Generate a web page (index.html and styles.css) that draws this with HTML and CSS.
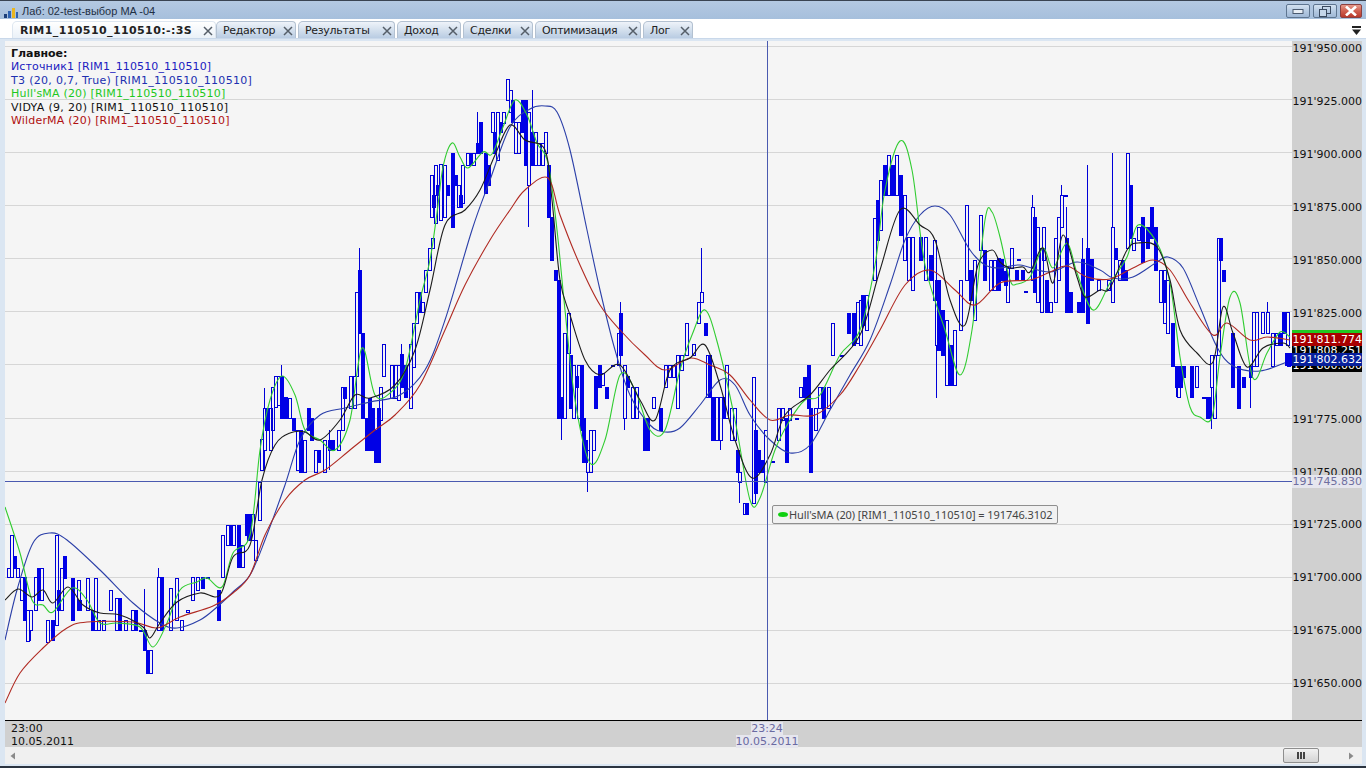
FILE: index.html
```html
<!DOCTYPE html>
<html lang="ru">
<head>
<meta charset="utf-8">
<title>Лаб: 02-test-выбор MA -04</title>
<link rel="stylesheet" href="styles.css">
</head>
<body>
<div class="window">
  <header class="titlebar">
    <svg class="app-icon" width="16" height="12" viewBox="0 0 16 12">
      <rect x="1" y="7" width="3" height="4" fill="#1d3f7a"/>
      <rect x="5" y="4" width="3" height="7" fill="#2f62b0"/>
      <rect x="9" y="1" width="3" height="10" fill="#e8b520"/>
      <rect x="13" y="5" width="2" height="6" fill="#2f62b0"/>
    </svg>
    <span class="title">Лаб: 02-test-выбор MA -04</span>
    <div class="winbtns">
      <button class="winbtn"><svg width="12" height="8" viewBox="0 0 12 8"><rect x="1" y="2.5" width="10" height="4" fill="#e8eef5" stroke="#4a5a70"/></svg></button>
      <button class="winbtn"><svg width="12" height="11" viewBox="0 0 12 11"><rect x="3.5" y="0.5" width="8" height="7" fill="none" stroke="#3a4a60"/><rect x="0.5" y="3.5" width="7" height="7" fill="#c4d6ea" stroke="#3a4a60"/></svg></button>
      <button class="winbtn close"><svg width="14" height="10" viewBox="0 0 14 10"><path d="M2 0.5 L12 9.5 M12 0.5 L2 9.5" stroke="#fff" stroke-width="2.6" fill="none"/></svg></button>
    </div>
  </header>

  <nav class="tabs">
    <div class="tab active"><span>RIM1_110510_110510:-:3S</span><svg class="tab-x" viewBox="0 0 10 10"><path d="M1 1 L9 9 M9 1 L1 9"/></svg></div>
    <div class="tab w-editor"><span>Редактор</span><svg class="tab-x" viewBox="0 0 10 10"><path d="M1 1 L9 9 M9 1 L1 9"/></svg></div>
    <div class="tab w-results"><span>Результаты</span><svg class="tab-x" viewBox="0 0 10 10"><path d="M1 1 L9 9 M9 1 L1 9"/></svg></div>
    <div class="tab w-income"><span>Доход</span><svg class="tab-x" viewBox="0 0 10 10"><path d="M1 1 L9 9 M9 1 L1 9"/></svg></div>
    <div class="tab w-deals"><span>Сделки</span><svg class="tab-x" viewBox="0 0 10 10"><path d="M1 1 L9 9 M9 1 L1 9"/></svg></div>
    <div class="tab w-opt"><span>Оптимизация</span><svg class="tab-x" viewBox="0 0 10 10"><path d="M1 1 L9 9 M9 1 L1 9"/></svg></div>
    <div class="tab w-log"><span>Лог</span><svg class="tab-x" viewBox="0 0 10 10"><path d="M1 1 L9 9 M9 1 L1 9"/></svg></div>
    <svg class="tabs-menu" width="9" height="9" viewBox="0 0 9 9"><rect x="0" y="0" width="9" height="2" fill="#222"/><path d="M0 3.5 H9 L4.5 9 Z" fill="#222"/></svg>
  </nav>

  <main class="frame">
    <div class="chart-row">
      <section class="chart">
        <svg id="plot" class="plot" viewBox="5 41 1287 679" width="1287" height="679" shape-rendering="auto"></svg>
        <div class="legend">
          <div class="legend-head">Главное:</div>
          <div class="c-blue">Источник1 [RIM1_110510_110510]</div>
          <div class="c-navy">T3 (20, 0,7, True) [RIM1_110510_110510]</div>
          <div class="c-green">Hull'sMA (20) [RIM1_110510_110510]</div>
          <div class="c-black">VIDYA (9, 20) [RIM1_110510_110510]</div>
          <div class="c-red">WilderMA (20) [RIM1_110510_110510]</div>
        </div>
        <div class="tooltip"><i class="dot"></i>Hull'sMA (20) [RIM1_110510_110510] = 191746.3102</div>
        <div class="marker"></div>
      </section>
      <aside class="price-axis">
        <span>191'950.000</span><span>191'925.000</span><span>191'900.000</span><span>191'875.000</span>
        <span>191'850.000</span><span>191'825.000</span><span>191'800.000</span><span>191'775.000</span>
        <span>191'750.000</span><span>191'725.000</span><span>191'700.000</span><span>191'675.000</span>
        <span>191'650.000</span>
        <div class="flag f-green"></div>
        <div class="flag f-black1">191'808.251</div>
        <div class="flag f-black2">191'800.000</div>
        <div class="flag f-red">191'811.774</div>
        <div class="flag f-blue">191'802.632</div>
        <div class="flag f-cross">191'745.830</div>
      </aside>
    </div>
    <div class="time-axis">
      <div class="time-first">23:00<br>10.05.2011</div>
      <div class="time-cross"><span>23:24</span><span>10.05.2011</span></div>
    </div>
    <div class="scrollbar">
      <svg width="6" height="8" viewBox="0 0 6 8"><path d="M5 0.5 V7.5 L0.5 4 Z" fill="#8a8a8a"/></svg>
      <div class="thumb"><i></i><i></i><i></i></div>
      <svg width="6" height="8" viewBox="0 0 6 8"><path d="M1 0.5 V7.5 L5.5 4 Z" fill="#8a8a8a"/></svg>
    </div>
  </main>
</div>
<script src="chart.js"></script>
</body>
</html>
```
FILE: styles.css
```css
* { box-sizing: border-box; }
html, body { margin: 0; height: 100%; overflow: hidden; background: #dbe6f2; }
body { font: 11px/13px "DejaVu Sans", sans-serif; color: #111; }

.window { width: 1366px; height: 768px; display: flex; flex-direction: column; border-bottom: 2px solid #2b3440; }

.titlebar {
  height: 19px; flex: none; display: flex; align-items: center; padding: 2px 4px 0 3px;
  border-top: 1px solid #3a4452;
  background: linear-gradient(#b4c9e2, #a6bfdc);
}
.app-icon { margin-top: 3px; flex: none; }
.title { margin-left: 3px; font: 11px/14px "Liberation Sans", Arial, sans-serif; color: #1f2f44; }
.winbtns { margin-left: auto; display: flex; gap: 3px; }
.winbtn {
  width: 24px; height: 14px; padding: 0; display: flex; align-items: center; justify-content: center;
  border: 1px solid #5e7590; border-radius: 2px;
  background: linear-gradient(#d3e1f0 0, #b5cae2 50%, #9fb8d6 100%);
}
.winbtn.close { width: 22px; border-color: #8a4040; background: linear-gradient(#e59a8c 0, #d05f4f 50%, #b83a2d 100%); }

.tabs { height: 20px; flex: none; display: flex; align-items: flex-end; gap: 2px; padding: 0 5px 0 12px; background: #fff; border-bottom: 1px solid #c9d8ea; }
.tab {
  height: 17px; display: flex; align-items: center; justify-content: space-between;
  padding: 0 2px 0 6px; border: 1px solid #b3c1d1; border-bottom: 0; border-radius: 5px 4px 0 0;
  background: linear-gradient(#eef3f9, #b9cce2); color: #222; letter-spacing: -0.3px;
}
.tab.active { width: 204px; padding-left: 7px; font-weight: 700; letter-spacing: 0.4px; background: linear-gradient(#fff, #eaf1f8); border-color: #dde6f0; margin-right: -2px; }
.w-editor { width: 80px; }
.w-results { width: 97px; }
.w-income { width: 64px; }
.w-deals { width: 70px; }
.w-opt { width: 106px; }
.w-log { width: 50px; }
.tab-x { width: 10px; height: 10px; margin-top: 2px; flex: none; }
.tab-x path { stroke: #555e68; stroke-width: 1.5; fill: none; }
.tabs-menu { margin-left: auto; align-self: center; margin-top: 3px; }

.frame { flex: 1; display: flex; flex-direction: column; padding: 0 4px 2px 5px; background: #dbe6f2; min-height: 0; }
.chart-row { height: 680px; flex: none; display: flex; border-bottom: 1px solid #000; margin-top: 2px; }
.chart { position: relative; width: 1287px; flex: none; background: #f5f5f5; overflow: hidden; }
.plot { display: block; }
.legend { position: absolute; left: 6px; top: 6px; line-height: 13.4px; white-space: nowrap; }
.legend-head { font-weight: 700; color: #111; }
.c-blue { color: #2020c0; letter-spacing: 0.13px; }
.c-navy { color: #202fb0; letter-spacing: 0.31px; }
.c-green { color: #1ec81e; letter-spacing: 0.2px; }
.c-black { color: #111; letter-spacing: 0.32px; }
.c-red { color: #b01010; letter-spacing: 0.18px; }

.tooltip {
  position: absolute; left: 767px; top: 464px; width: 286px; height: 19px; padding: 0 4px 0 16px;
  display: flex; align-items: center; white-space: nowrap; color: #444;
  font-family: "Noto Sans", sans-serif; letter-spacing: -0.08px;
  background: #f1f1f1; border: 1px solid #8f8f8f; border-radius: 2px;
}
.dot { position: absolute; left: 5px; top: 6px; width: 10px; height: 5px; border-radius: 50%; background: #10d010; }
.marker { position: absolute; right: 0; top: 312px; width: 7px; height: 13px; background: #0000e0; }

.price-axis {
  position: relative; width: 70px; flex: none; background: #d0d0d0; display: grid;
  grid-auto-rows: 52.95px; align-content: start; color: #111;
}
.price-axis > span { display: block; line-height: 13px; text-align: right; white-space: nowrap; padding-top: 1px; }
.flag { position: absolute; left: 0; right: 0; text-align: right; white-space: nowrap; line-height: 13px; overflow: hidden; }
.f-green { top: 289px; height: 3px; background: #20c820; }
.f-red { top: 292px; height: 13px; background: #a80000; color: #fff; }
.f-black1 { top: 303px; height: 10px; background: #000; color: #fff; }
.f-blue { top: 312px; height: 13px; background: #08209c; color: #fff; }
.f-black2 { top: 322px; height: 9px; background: #000; color: #fff; line-height: 6px; }
.f-cross { top: 434px; height: 13px; background: #e6e6ee; color: #6f6fa0; }

.time-axis { position: relative; height: 26px; flex: none; background: #d0d0d0; padding: 1px 0 0 6px; }
.time-first { line-height: 13px; }
.time-cross { position: absolute; left: 730px; top: 1px; width: 64px; display: flex; flex-direction: column; align-items: center; color: #6a6aa2; }
.time-cross span { background: #e6e6ee; line-height: 13px; }

.scrollbar { height: 17px; flex: none; display: flex; align-items: center; padding: 0 8px 0 5px; background: #f0f0f0; }
.thumb {
  margin-left: auto; margin-right: 29px; width: 36px; height: 15px; display: flex; align-items: center; justify-content: center; gap: 1px;
  border: 1px solid #8e8e8e; border-radius: 2px; background: linear-gradient(#f2f2f2, #d4d4d4);
}
.thumb i { width: 2px; height: 7px; background: #444; }
```
FILE: chart.js
```javascript
// Candles: [x, top, bottom, filled, high, low]
var C = [
[8,568,577,0],[11,535,577,0],[14,556,568,1],[17,568,577,0],[21,577,600,0],[24,577,620,1],[27,610,641,0,0,641],[30,610,630,0,0,641],
[35,577,610,0],[38,568,600,1],[41,568,600,0],[47,620,642,0],[52,620,640,1],[56,535,625,0],[58,590,610,1],[61,568,610,0],[64,556,578,1],[72,578,620,1],
[78,580,610,0],[79,600,610,1],[87,578,610,0],[92,610,630,1],[95,578,630,0],[98,620,630,0],[103,620,630,0],[110,590,610,0],[116,598,630,0],[119,598,630,1],[125,620,630,0],
[132,610,630,0],[135,610,630,1],[140,630,631,0],[144,630,650,1,589],[147,650,673,1],[150,650,673,0],[158,577,630,0,568],[161,577,630,1],[170,588,630,0],[176,578,620,0],
[181,620,630,0],[187,610,612,0],[192,577,600,0],[197,577,590,0],[202,577,588,1],[207,577,578,0],[218,590,620,1],[222,535,577,0],[227,525,545,0],[230,525,545,1],[233,525,545,0],[238,525,567,1],[242,545,567,0],[246,514,535,1],
[248,514,540,1],[252,514,540,0],[255,540,560,0],[259,482,520,0],[261,439,470,0],[264,408,450,0,388,470],[266,408,430,1],[270,408,450,0],[272,387,430,0],[275,376,407,0],[278,376,405,0],[281,376,418,1,365],[285,397,418,1],[289,398,418,0],
[293,418,430,1],[297,430,470,0],[300,430,472,1],[304,440,472,0],[308,408,430,1],[311,418,440,1],[315,450,472,0],[318,450,462,1],[324,440,472,0],[329,440,450,1,430,470],[332,440,450,1],[338,430,450,0],[342,387,430,0],[344,387,398,1],
[350,376,408,0],[354,376,408,0],[356,292,376,0],[359,270,333,1,248],[362,333,418,1],[366,418,450,1],[369,398,450,1],[372,408,450,1],[375,430,462,1],[378,408,462,1],[380,387,420,0],[383,344,376,0],[391,365,398,0],[395,365,398,0],[398,365,400,0],
[401,354,387,1,344],[405,365,397,1],[410,344,408,0],[413,323,367,0],[416,292,323,0],[419,292,312,1],[422,302,312,0],[425,270,292,0],[429,248,270,0],[432,238,248,0],
[431,175,217,0],[433,195,207,0],[435,165,223,0],[437,185,195,1],[440,164,220,0],[444,165,217,0],[447,185,195,1],[452,153,227,1],[455,175,185,1],[458,185,207,0],[460,195,207,1],[462,165,203,0],[467,153,165,0],[470,153,165,1],[473,153,165,0],
[477,143,153,1,112],[480,122,153,1],[485,153,193,1],[488,165,185,1],[492,112,132,0],[494,132,153,1],[497,112,160,0],[500,122,132,1],[503,112,123,0],[507,79,100,0],[510,90,112,0],[512,100,122,1],[515,122,153,0],[518,122,153,0],[522,100,132,1],[525,100,165,1],[528,112,185,0,0,227],
[532,132,165,1,90],[535,132,165,0],[538,143,165,0],[542,143,165,0],[545,132,153,0,132],[548,165,217,1],[551,217,260,1],[555,270,280,1],[558,280,418,1],[561,397,418,1,0,440],[564,333,418,0],[568,313,353,0],[570,355,408,1],[573,365,418,0],[576,376,387,1],[578,365,418,0],[581,365,430,1],[583,418,462,1],[585,440,462,1],[587,450,472,0,0,492],[590,430,472,0],[593,430,450,0],
[595,376,408,1],[599,365,387,1],[602,373,385,0],[606,387,398,1],[612,365,366,0],[618,333,365,0],[620,313,355,1,302],[624,365,418,0,0,430],[627,376,387,1],[632,387,418,0],[636,387,418,0],[644,418,450,1],[647,418,450,1],[653,397,408,0],[660,408,430,1],[665,365,387,0],[669,365,377,0],[673,365,377,0],[677,355,408,0],[681,355,370,0],
[686,323,355,0],[693,344,355,0],[698,302,323,0],[701,292,302,0,248],[705,323,335,1],[707,355,397,0],[709,355,397,1],[712,397,440,1],[716,397,440,0],[720,397,440,0,0,450],[723,397,418,1],[726,365,418,0],[731,408,440,0],[734,408,440,0],[737,450,472,1],[739,472,482,0,0,503],[744,503,514,0],[746,503,514,1],[753,377,503,0],[755,430,493,1],[758,450,472,1],[762,460,472,1],[765,430,482,0],
[772,461,462,0],[778,408,440,0],[782,408,420,0],[786,418,462,1],[789,408,420,0],[796,418,419,0],[800,387,397,0],[804,377,397,1],[808,365,408,1],[810,408,472,1],[815,408,430,0],[819,387,408,0],[823,387,418,1],[828,387,408,0],[832,323,355,0],[841,355,356,0],[848,313,333,1],[853,313,345,1],[857,302,343,0],
[860,300,345,0],[862,295,325,1],[866,295,330,0],[874,218,280,0],[877,200,240,1],[880,180,230,0],[884,165,195,1],[888,155,195,0],[892,165,195,1],[896,155,195,0],[900,175,235,1],[904,195,260,0],[908,237,280,0],[912,237,290,0],[920,237,260,1],[925,237,280,0],[930,255,280,1],[934,240,300,0],[936,280,345,0,0,398],[938,280,350,1],[942,310,355,1],[946,320,385,0],[950,345,385,1],[954,330,385,0],[960,280,330,0],[966,205,280,0],[970,270,300,1],[974,260,320,0],[980,215,250,0],[984,250,280,1],[990,260,290,0],[994,260,290,0],[998,258,290,1],
[1001,259,280,1],[1005,271,285,1],[1007,268,302,0],[1011,248,268,0],[1016,270,280,1],[1018,259,260,0],[1022,270,280,1],[1025,291,292,0],[1032,207,280,0,195],[1034,217,292,1],[1037,227,302,0],[1041,248,312,0],[1043,227,260,0],[1046,280,312,1],[1050,302,312,0],[1055,238,302,0],[1058,217,280,0],[1061,195,227,0,185],[1065,195,196,0],[1066,238,312,1,207],[1070,292,312,1],[1078,302,312,1],[1082,259,312,1,238],[1087,248,323,1,165],[1091,259,280,1],[1098,280,290,0],[1108,280,290,0],[1112,227,302,0,153],[1115,248,259,1],[1119,260,280,0],[1122,260,280,1],[1125,270,280,1],[1127,153,248,0],[1130,185,238,1],[1133,238,250,0],[1138,227,240,0],[1142,217,262,1],[1147,227,248,1],[1151,207,238,1],[1155,227,270,1],[1160,270,302,0],[1163,280,302,1],[1164,270,323,0],[1167,280,333,0],
[1172,323,366,1],[1176,366,387,1,0,397],[1178,366,397,0],[1180,366,387,1],[1183,366,377,1],[1191,366,397,1],[1196,366,387,0],[1203,397,398,0],[1207,397,418,1],[1209,397,418,1],[1211,355,387,0,0,429],[1214,355,418,0],[1218,238,355,0],[1220,238,260,1],[1223,270,281,1],[1232,333,387,1],[1238,366,408,1],[1243,377,387,1],[1250,366,377,1,0,408],[1253,312,366,0],[1256,312,366,0],[1262,312,333,0],[1267,312,333,0,302],[1272,333,366,0],[1276,333,345,0],[1280,333,345,1],[1283,312,333,1],[1287,312,345,0],[1288,355,366,1]
];

var T3 = [[5,640],[17,590],[33,543],[50,533],[67,540],[100,570],[133,603],[160,623],[177,628],[200,620],[217,607],[233,592],[250,575],[265,540],[285,485],[300,440],[320,415],[345,408],[370,402],[400,395],[425,370],[445,320],[472,230],[490,180],[510,127],[530,109],[545,106],[557,112],[570,150],[587,230],[600,290],[615,350],[630,395],[650,425],[665,432],[680,428],[700,405],[720,380],[735,385],[750,415],[770,440],[790,453],[810,445],[830,410],[850,375],[870,340],[890,285],[905,240],[920,215],[935,206],[950,215],[970,250],[985,265],[1000,268],[1020,265],[1050,272],[1077,262],[1100,270],[1113,278],[1133,277],[1157,262],[1168,257],[1183,268],[1200,307],[1217,347],[1233,366],[1260,371],[1287,362]];
var HULL = [[5,507],[20,553],[32,600],[43,605],[53,612],[72,588],[87,600],[100,623],[117,623],[140,627],[153,647],[167,623],[180,590],[197,582],[207,578],[222,587],[233,553],[250,535],[260,450],[270,400],[282,376],[295,395],[305,430],[320,440],[335,450],[350,420],[362,348],[375,395],[390,393],[405,370],[420,300],[430,260],[437,213],[443,167],[452,143],[460,157],[468,168],[483,152],[492,154],[503,127],[515,100],[527,115],[537,143],[548,163],[557,230],[565,310],[575,400],[590,463],[605,440],[620,375],[635,390],[650,430],[665,430],[680,370],[692,335],[705,310],[718,345],[735,420],[750,500],[760,498],[775,450],[790,420],[805,400],[820,395],[840,355],[860,330],[875,265],[885,190],[900,141],[912,170],[925,265],[945,330],[960,375],[972,330],[985,220],[992,212],[1000,237],[1010,280],[1017,284],[1030,277],[1043,248],[1053,268],[1067,243],[1077,273],[1093,310],[1110,283],[1127,257],[1138,225],[1157,243],[1170,283],[1180,357],[1190,407],[1200,417],[1212,417],[1220,357],[1230,297],[1240,303],[1253,378],[1267,353],[1280,332],[1290,337]];
var VIDYA = [[5,600],[18,589],[32,597],[43,590],[53,603],[68,587],[83,605],[100,613],[120,615],[143,627],[150,638],[160,623],[177,602],[200,593],[220,595],[233,557],[250,545],[262,480],[275,445],[290,433],[305,432],[320,440],[340,420],[355,395],[370,398],[395,385],[415,350],[430,290],[445,225],[465,210],[480,190],[495,155],[510,125],[525,140],[545,150],[552,200],[560,280],[570,315],[585,360],[600,375],[620,365],[640,400],[655,420],[670,370],[690,358],[705,345],[720,385],[735,440],[752,478],[770,455],[785,415],[810,395],[830,370],[860,335],[880,270],[900,210],[920,225],[935,240],[950,300],[965,325],[978,265],[992,250],[1000,262],[1010,268],[1023,267],[1030,272],[1043,248],[1053,283],[1063,235],[1077,277],[1085,297],[1100,290],[1110,288],[1127,250],[1138,243],[1157,247],[1170,280],[1180,330],[1197,353],[1213,362],[1223,307],[1233,333],[1247,367],[1263,348],[1283,343],[1290,348]];
var WILDER = [[5,703],[20,673],[43,648],[67,628],[87,622],[133,622],[157,628],[180,617],[213,606],[233,593],[250,575],[265,535],[285,500],[305,480],[325,470],[350,450],[375,430],[395,415],[420,385],[445,330],[465,285],[490,240],[510,210],[525,190],[548,178],[560,215],[580,265],[600,305],[620,330],[645,355],[665,370],[690,358],[710,365],[730,375],[750,400],[770,420],[790,415],[815,415],[840,395],[860,365],[880,330],[905,285],[930,270],[955,290],[975,305],[1000,283],[1030,280],[1050,272],[1067,266],[1087,277],[1110,279],[1133,268],[1153,260],[1170,270],[1190,303],[1213,335],[1227,323],[1250,340],[1267,337],[1290,340]];

function smooth(p) {
  var d = "M" + p[0][0] + " " + p[0][1];
  for (var i = 0; i < p.length - 1; i++) {
    var a = p[Math.max(i - 1, 0)], b = p[i], c = p[i + 1], e = p[Math.min(i + 2, p.length - 1)];
    var c1x = b[0] + (c[0] - a[0]) / 6, c1y = b[1] + (c[1] - a[1]) / 6;
    var c2x = c[0] - (e[0] - b[0]) / 6, c2y = c[1] - (e[1] - b[1]) / 6;
    d += "C" + c1x.toFixed(1) + " " + c1y.toFixed(1) + " " + c2x.toFixed(1) + " " + c2y.toFixed(1) + " " + c[0] + " " + c[1];
  }
  return d;
}

var NS = "http://www.w3.org/2000/svg";
var svg = document.getElementById("plot");
function add(d, stroke, fill, crisp, width) {
  var el = document.createElementNS(NS, "path");
  el.setAttribute("d", d);
  el.setAttribute("stroke", stroke);
  el.setAttribute("fill", fill || "none");
  el.setAttribute("stroke-width", width || "1");
  if (crisp) el.setAttribute("shape-rendering", "crispEdges");
  svg.appendChild(el);
}

var grid = "";
for (var g = 0; g < 13; g++) {
  var y = Math.round(46 + g * 53.08) + 0.5;
  grid += "M5 " + y + "H1292";
}
add(grid, "#d6d6d6", "none", true);

var hollow = "", solid = "";
C.forEach(function (k) {
  var x = k[0] + 0.5, t = k[1] + 0.5, b = k[2] + 0.5;
  var path = "M" + (x - 1) + " " + t + "h3V" + b + "h-3Z";
  if (k[3]) solid += path; else hollow += path;
  if (k[4]) hollow += "M" + x + " " + k[4] + "V" + t;
  if (k[5]) hollow += "M" + x + " " + b + "V" + k[5];
});
add(hollow, "#0000d8", "none", true);
add(solid, "#0000e6", "#0000e6", true);

add(smooth(T3), "#2b3fa8", "none", false, "1.1");
add(smooth(HULL), "#30cc30", "none", false, "1.1");
add(smooth(WILDER), "#b02a22", "none", false, "1.1");
add(smooth(VIDYA), "#1c1c1c", "none", false, "1.1");

add("M767.5 41V720M5 481.5H1292", "#4a5ab0", "none", true);
```
